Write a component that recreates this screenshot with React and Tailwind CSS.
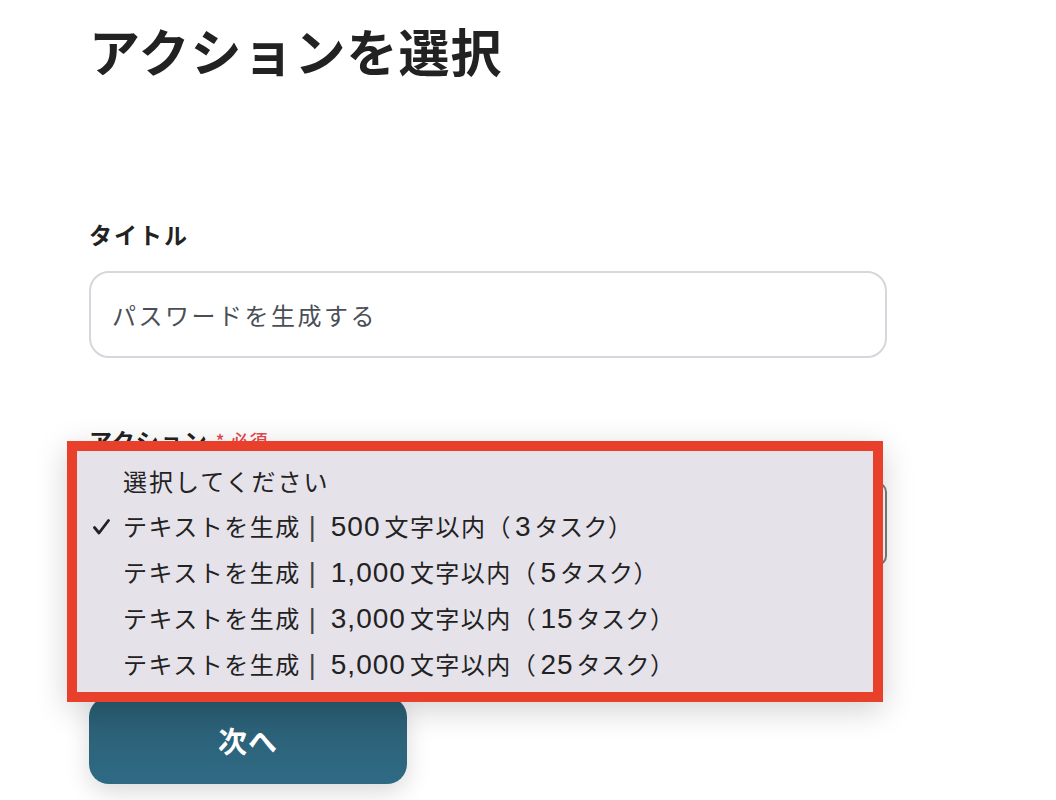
import React from "react";

const options = [
  { chars: "500", tasks: "3" },
  { chars: "1,000", tasks: "5" },
  { chars: "3,000", tasks: "15" },
  { chars: "5,000", tasks: "25" },
];

const Check = () => (
  <svg width="17" height="16" viewBox="0 0 17 16" fill="none">
    <path d="M1.5 8.5 L6 14 L15.5 1.5" stroke="#222" strokeWidth="2.8" strokeLinecap="round" strokeLinejoin="round" />
  </svg>
);

// digits use a Helvetica-like face, a bit larger than the kana
const Num = ({ children, className }) => (
  <span className={`font-['Liberation_Sans'] text-[28px] tracking-[1px] ${className}`}>{children}</span>
);

export default function App() {
  return (
    <div
      className="min-h-[800px] bg-white pl-[89px] pt-[22px] text-[#222]"
      style={{ fontFamily: '"Noto Sans CJK JP", "Noto Sans", sans-serif' }}
    >
      <h1 className="text-[51px] font-bold leading-[56px] tracking-[1px]">アクションを選択</h1>

      {/* TITLE */}
      <div className="mt-[140px] text-[23px] font-bold leading-[32px] tracking-[2px]">タイトル</div>
      <div className="mt-[21px] flex h-[87px] w-[798px] items-center rounded-[20px] border-2 border-[#d4d7db] px-[21px] text-[24px] tracking-[2.5px] text-[#4a4f57]">
        パスワードを生成する
      </div>

      {/* ACTION */}
      <div className="relative mt-[66px] w-[798px]">
        <div className="flex items-center text-[23px] font-bold leading-[32px] tracking-[1px]">
          アクション
          <span className="ml-2 text-[18px] font-medium text-[#e5484d]">* 必須</span>
        </div>
        <div className="mt-[26px] h-[84px] rounded-[10px] border-2 border-[#7d7d7d] bg-white" />

        {/* OPEN MENU */}
        <div className="absolute left-[-22px] top-[17px] z-10 w-[816px] border-[10px] border-[#e8402a] bg-[#e6e2ea] pt-[7px] pb-[4px] shadow-[0_8px_30px_rgba(0,0,0,0.18)]">
          <div className="flex h-[46px] items-center pl-[46px] text-[24px] tracking-[2px]">選択してください</div>
          {options.map((opt, i) => (
            <div key={opt.chars} className="flex h-[46px] items-center text-[24px] tracking-[1.5px]">
              <span className="flex w-[46px] justify-end pr-[13px]">{i === 0 && <Check />}</span>
              <span className="leading-none">
                テキストを生成
                <span className="ml-[8px] font-['Liberation_Sans'] text-[27px] font-light tracking-normal text-[#444]">|</span>
                <Num className="ml-[15px] mr-[4px]">{opt.chars}</Num>
                文字以内（
                <Num className="ml-[3px] mr-[3px]">{opt.tasks}</Num>
                <span className="tracking-[0.5px]">タスク）</span>
              </span>
            </div>
          ))}
        </div>
      </div>

      <button className="mt-[131px] flex h-[87px] w-[318px] items-center justify-center rounded-[20px] bg-gradient-to-b from-[#2a5d72] to-[#2f6a84] text-[29px] font-bold tracking-[1px] text-white shadow-[0_8px_24px_rgba(0,0,0,0.15)]">
        次へ
      </button>
    </div>
  );
}
